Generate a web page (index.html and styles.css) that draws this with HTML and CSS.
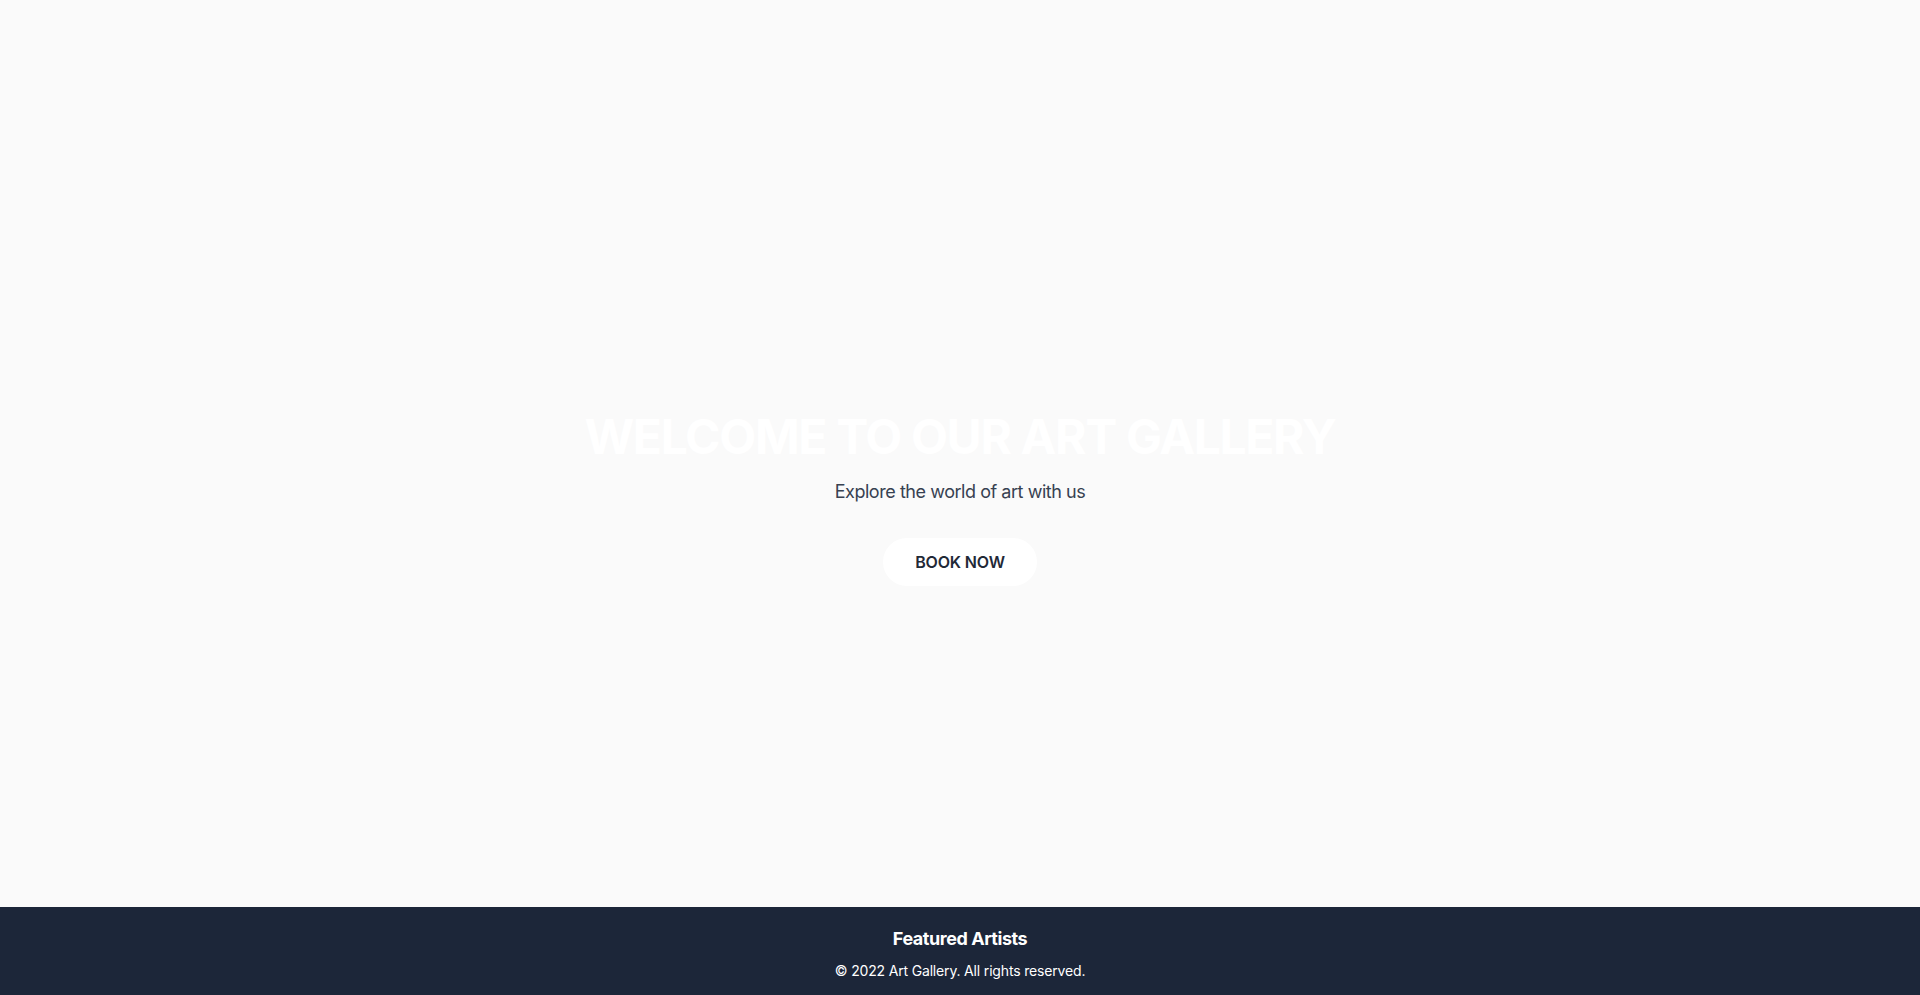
FILE: index.html
```html
<!DOCTYPE html>
<html lang="en">
<head>
<meta charset="utf-8">
<title>Art Gallery</title>
<link rel="stylesheet" href="styles.css">
</head>
<body>
<section class="hero">
  <div class="hero-content">
    <h1 class="hero-title">WELCOME TO OUR ART GALLERY</h1>
    <p class="hero-subtitle">Explore the world of art with us</p>
    <a class="btn-book" href="#">BOOK NOW</a>
  </div>
</section>
<footer class="site-footer">
  <h3 class="footer-title">Featured Artists</h3>
  <p class="footer-copy">© 2022 Art Gallery. All rights reserved.</p>
</footer>
</body>
</html>
```
FILE: styles.css
```css
* { box-sizing: border-box; }
html, body { margin: 0; padding: 0; }
body {
  font-family: Inter, "Noto Sans", "Liberation Sans", sans-serif;
  background: #fafafa;
  color: #1f2937;
}
.hero {
  height: 100vh;
  display: flex;
  align-items: center;
  justify-content: center;
  text-align: center;
  padding-top: 3px;
}
.hero-content {
  display: flex;
  flex-direction: column;
  align-items: center;
}
.hero-title {
  margin: 0 0 17px;
  font-size: 48px;
  line-height: 48px;
  font-weight: 700;
  color: #ffffff;
  letter-spacing: -0.028em;
}
.hero-subtitle {
  margin: 0 0 32px;
  font-size: 18px;
  line-height: 28px;
  color: #374151;
  letter-spacing: -0.025em;
}
.btn-book {
  display: inline-block;
  padding: 12px 32px;
  background: #ffffff;
  color: #1f2937;
  border-radius: 9999px;
  font-size: 16px;
  line-height: 24px;
  font-weight: 600;
  text-decoration: none;
  letter-spacing: -0.01em;
}
.site-footer {
  position: fixed;
  left: 0;
  right: 0;
  bottom: 0;
  background: #1c2639;
  color: #ffffff;
  text-align: center;
  padding: 18px 0 14px;
}
.footer-title {
  margin: 0 0 8px;
  font-size: 18px;
  line-height: 28px;
  font-weight: 700;
  letter-spacing: -0.025em;
}
.footer-copy {
  margin: 0;
  font-size: 14px;
  line-height: 20px;
  letter-spacing: -0.012em;
}
```
